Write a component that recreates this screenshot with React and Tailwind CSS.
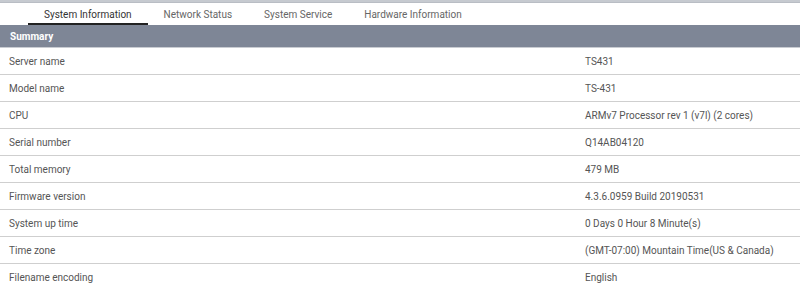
const rows = [
  ['Server name', 'TS431'],
  ['Model name', 'TS-431'],
  ['CPU', 'ARMv7 Processor rev 1 (v7l) (2 cores)'],
  ['Serial number', 'Q14AB04120'],
  ['Total memory', '479 MB'],
  ['Firmware version', '4.3.6.0959 Build 20190531'],
  ['System up time', '0 Days 0 Hour 8 Minute(s)'],
  ['Time zone', '(GMT-07:00) Mountain Time(US & Canada)'],
  ['Filename encoding', 'English'],
];

const tabs = ['System Information', 'Network Status', 'System Service', 'Hardware Information'];

export default function App() {
  return (
    <div className="w-[800px] h-[289px] overflow-hidden bg-white font-['Roboto',sans-serif] text-[10px]">
      <div className="h-[3px] bg-[#c6cad0] border-b border-[#b9bdc4]" />
      <div className="flex h-[22px] pl-[28px]">
        {tabs.map((t, i) => (
          <div
            key={t}
            className={
              i === 0
                ? 'px-4 pt-[7px] leading-none text-[#333] border-b-2 border-[#222]'
                : 'px-4 pt-[7px] leading-none text-[#666] border-b-2 border-transparent'
            }
          >
            {t}
          </div>
        ))}
      </div>
      <div className="h-[23px] bg-[#7e8696] flex items-center pl-[10px] text-white font-bold border-b border-[#c9ccd2]">
        Summary
      </div>
      <div>
        {rows.map(([k, v]) => (
          <div key={k} className="flex h-[27px] items-center border-b border-[#cfcfcf] text-[#555]">
            <div className="w-[585px] pl-[9px]">{k}</div>
            <div>{v}</div>
          </div>
        ))}
      </div>
    </div>
  );
}
